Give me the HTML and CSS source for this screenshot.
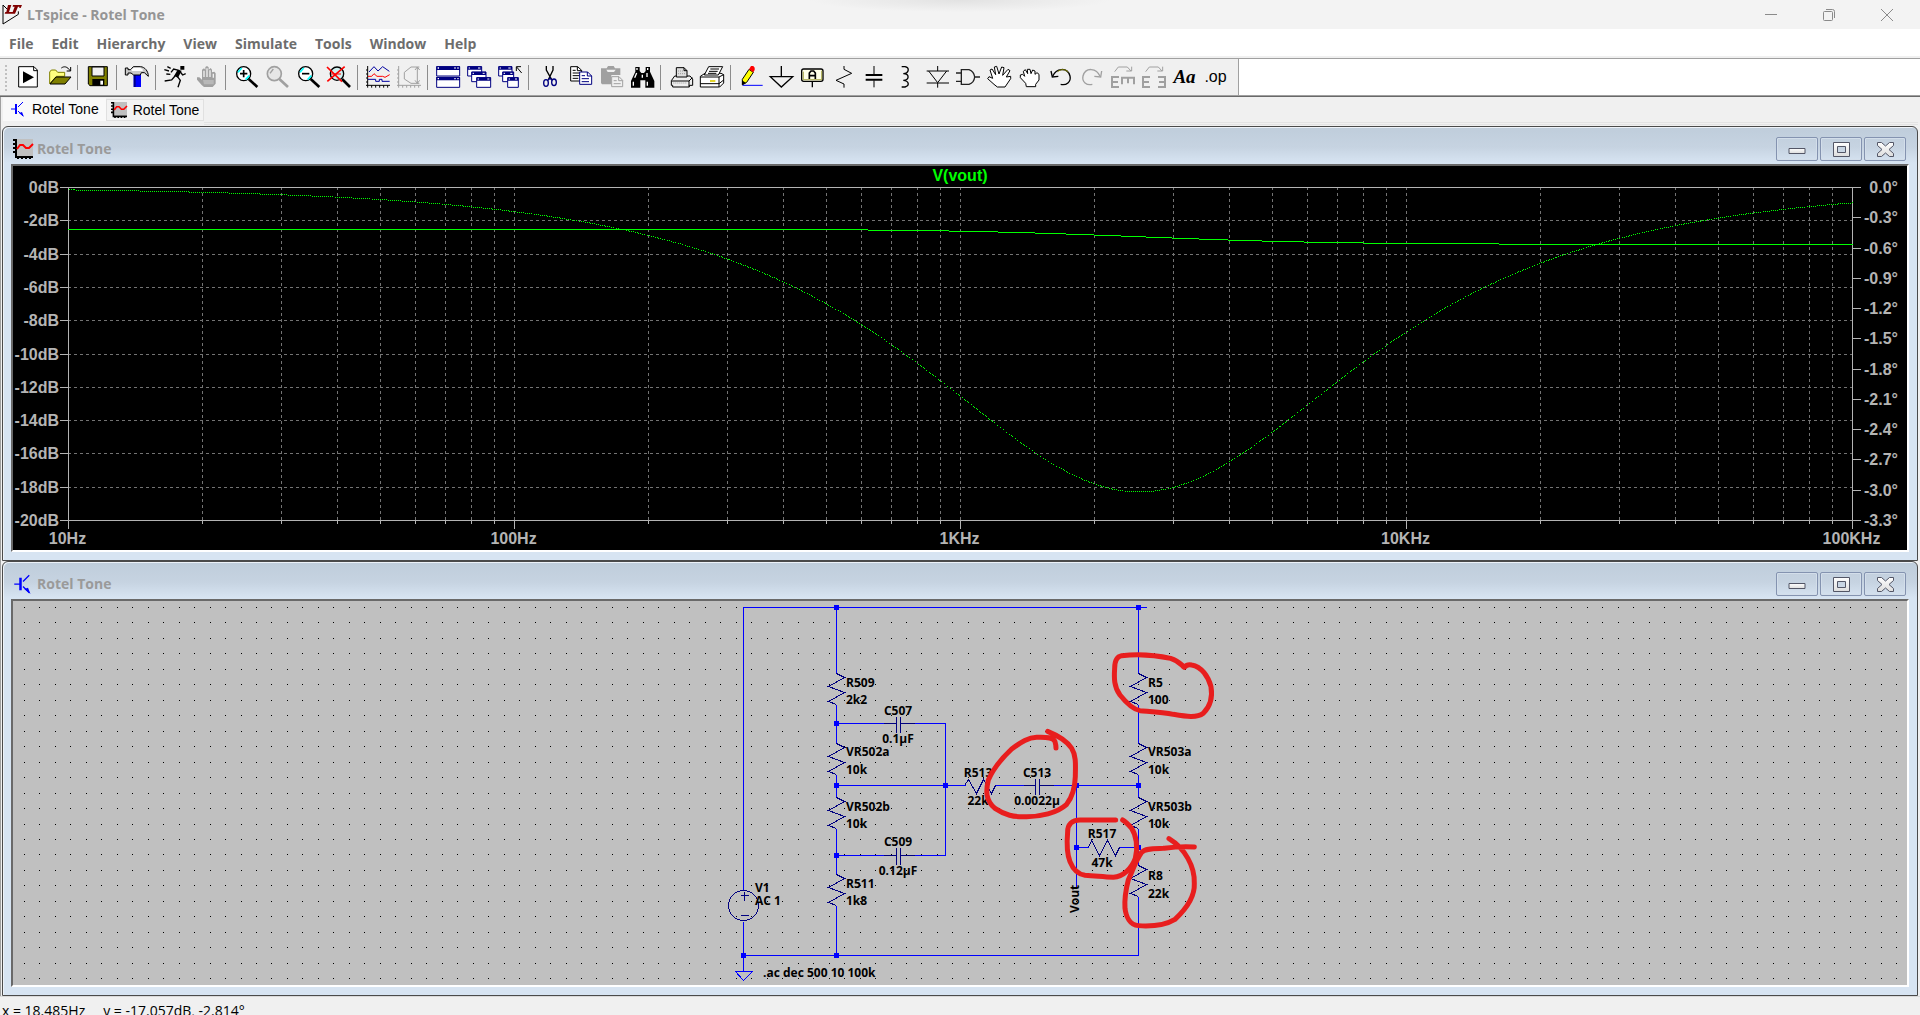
FILE: index.html
```
<!DOCTYPE html>
<html lang="en">
<head>
  <meta charset="utf-8" />
  <meta name="viewport" content="width=device-width, initial-scale=1" />
  <title>LTspice - Rotel Tone</title>
  <link rel="stylesheet" href="styles.css">
</head>
<body>
  <header class="titlebar">
    <svg class="logo" viewBox="0 0 63 63"><path d="M3 3V60L49 31V22" fill="none" stroke="#000" stroke-width="3"/><path d="M3 3L18 18" stroke="#000" stroke-width="3"/><path d="M18 3H28L21 24H33L32 29H8L10 24H13ZM33 3H60L56 12H52V8H48L39 29H30L38 8H32Z" fill="#800000"/></svg>
    <h1>LTspice - Rotel Tone</h1>
    <div class="sys">
      <button aria-label="Minimize"><svg viewBox="0 0 12 12"><path d="M0 5.5H12"/></svg></button>
      <button aria-label="Restore"><svg viewBox="0 0 12 12"><rect x=".5" y="2.5" width="9" height="9" rx="1"/><path d="M3 .5H9.5Q11.500 .5 11.500 2.500V9"/></svg></button>
      <button aria-label="Close"><svg viewBox="0 0 12 12"><path d="M0 0L12 12M12 0L0 12"/></svg></button>
    </div>
  </header>

  <nav class="menu">
    <button>File</button><button>Edit</button><button>Hierarchy</button><button>View</button><button>Simulate</button><button>Tools</button><button>Window</button><button>Help</button>
  </nav>

  <div class="toolrow">
    <div class="toolbar">
      <button aria-label="Run schematic"><svg viewBox="0 0 75 75"><path d="M11 5H57L67 15V66H11Z" fill="#fff" stroke="#000" stroke-width="3"/><path d="M56 5V17H67" fill="none" stroke="#000" stroke-width="3"/><path d="M24 19V55L57 37Z"/></svg></button>
      <button aria-label="Open"><svg viewBox="0 0 75 75"><path d="M11 56V21L16 15H29L35 22H56V34H31Z" fill="#ffff80" stroke="#808000" stroke-width="3"/><path d="M12 57L30 36H75L57 57Z" fill="#808000" stroke="#000" stroke-width="3"/><path d="M46 9C54 3 64 4 72 17M62 18H74V6" fill="none" stroke="#000" stroke-width="3"/></svg></button>
      <i class="sep"></i>
      <button aria-label="Save"><svg viewBox="0 0 75 75"><path d="M10 5H67V62H15L10 57Z" fill="#808000" stroke="#000" stroke-width="3"/><path d="M21 6H57V33H21Z" fill="#f0f0f0" stroke="#000" stroke-width="3"/><path d="M22 42H58V62H22Z"/><path d="M46 47H54V59H46Z" fill="#fff"/></svg></button>
      <i class="sep"></i>
      <button aria-label="Control panel"><svg viewBox="0 0 75 75"><path d="M29 29H51V66H29Z" fill="#00f"/><path d="M29 29H35V66H29Z" fill="#008"/><path d="M4 9H12V14H20L28 5H50C62 6 73 18 73 34L61 23H52L49 30H29L21 24H12V30H4Z" fill="#c8c8c8" stroke="#000" stroke-width="3"/><path d="M22 13L30 8H48L56 13V18H24Z" fill="#fff"/></svg></button>
      <i class="sep"></i>
      <button aria-label="Run"><svg viewBox="0 0 75 75"><path d="M52 3H64V14H52ZM44 14L56 17L45 38L33 33Z"/><path d="M50 17L32 12L24 22M52 21L59 30L68 26M36 33L26 45L5 48M43 34L52 46L45 67M13 5L23 10M4 14L18 18M10 27L22 28" fill="none" stroke="#000" stroke-width="4"/></svg></button>
      <button aria-label="Halt"><svg viewBox="0 0 75 75"><path d="M23 60L9 44V37H16L24 44V14L30 10L34 14V6L39 3L44 7V14L50 9L54 14V22L61 20L65 25V56L56 66H30Z" fill="#a0a0a0"/><path d="M30 17V36M39 10V36M48 16V36M58 26V38" stroke="#f0f0f0" stroke-width="4"/><path d="M27 45H59V58H30Z" fill="#b8b8b8"/></svg></button>
      <i class="sep"></i>
      <button aria-label="Zoom in"><svg viewBox="0 0 75 75"><circle cx="32" cy="26" r="21" fill="#fff" stroke="#000" stroke-width="4"/><path d="M15 22L26 9M38 44L49 32" stroke="#0ff" stroke-width="5"/><path d="M21 26H43M32 15V37" stroke="#000" stroke-width="5"/><path d="M47 42L73 66" stroke="#000" stroke-width="8"/></svg></button>
      <button aria-label="Pan"><svg viewBox="0 0 75 75"><circle cx="31" cy="26" r="21" fill="#e6e6e6" stroke="#a0a0a0" stroke-width="5"/><path d="M18 25L28 12" stroke="#a0a0a0" stroke-width="4"/><path d="M46 42L72 66" stroke="#a0a0a0" stroke-width="8"/></svg></button>
      <button aria-label="Zoom out"><svg viewBox="0 0 75 75"><circle cx="32" cy="26" r="21" fill="#fff" stroke="#000" stroke-width="4"/><path d="M15 22L26 9M38 44L49 32" stroke="#0ff" stroke-width="5"/><path d="M21 26H43" stroke="#000" stroke-width="5"/><path d="M47 42L73 66" stroke="#000" stroke-width="8"/></svg></button>
      <button aria-label="Zoom full extents"><svg viewBox="0 0 75 75"><circle cx="33" cy="26" r="20" fill="#cfefef" stroke="#000" stroke-width="4"/><path d="M48 42L72 66" stroke="#000" stroke-width="8"/><path d="M3 6L48 50M56 5L4 49" stroke="#f00" stroke-width="5"/><path d="M15 27H45" stroke="#f00" stroke-width="3"/></svg></button>
      <i class="sep"></i>
      <button aria-label="Autorange"><svg viewBox="0 0 75 75"><path d="M8 3V68M3 61H75M3 15H8M3 27H8M3 39H8M3 51H8M20 61V68M32 61V68M44 61V68M56 61V68M68 61V68" fill="none" stroke="#000" stroke-width="3"/><path d="M12 21L27 5L39 18L53 5L73 19" fill="none" stroke="#0000a0" stroke-width="3"/><path d="M9 34H20L27 26L36 34H53L60 37L74 29" fill="none" stroke="#f00" stroke-width="3"/><path d="M9 43H32V49H43V43H51V49H74" fill="none" stroke="#0000a0" stroke-width="3"/></svg></button>
      <button aria-label="Plot settings"><svg viewBox="0 0 75 75"><g fill="none" stroke="#a0a0a0" stroke-width="3"><path d="M8 3V68M3 61H75M3 15H8M3 27H8M3 39H8M3 51H8M20 61V68M32 61V68M44 61V68M56 61V68M68 61V68"/><path d="M70 6H45L25 22V42L45 55H70M64 6V55M57 15L64 6L71 15M57 46L64 55L71 46"/></g></svg></button>
      <i class="sep"></i>
      <button aria-label="Tile windows"><svg viewBox="0 0 75 75"><g fill="#fff" stroke="#000080" stroke-width="3"><path d="M5 5H74V33H5ZM5 37H74V67H5Z"/></g><path d="M4 4H75V15H4ZM4 36H75V46H4Z" fill="#000080"/><path d="M8 9H12M58 9H62M67 9H71M8 41H12M58 41H62M67 41H71" stroke="#fff" stroke-width="4"/></svg></button>
      <button aria-label="Cascade windows"><svg viewBox="0 0 75 75"><g fill="#fff" stroke="#000080" stroke-width="3"><path d="M5 5H47V33H5Z"/><path d="M17 21H60V50H17Z"/><path d="M32 38H74V67H32Z"/></g><path d="M5 4H47V14H5ZM17 20H60V30H17ZM32 37H74V47H32Z" fill="#000080"/><path d="M8 9H12M36 9H43M20 25H24M50 25H56M35 42H39M64 42H70" stroke="#fff" stroke-width="3"/></svg></button>
      <button aria-label="Close all"><svg viewBox="0 0 75 75"><g fill="#fff" stroke="#000080" stroke-width="3"><path d="M5 5H45V33H5Z"/><path d="M17 21H50V50H17Z"/><path d="M32 38H64V67H32Z"/></g><path d="M5 4H45V14H5ZM17 20H50V30H17ZM32 37H64V47H32Z" fill="#000080"/><path d="M8 9H12M34 9H41M20 25H24M40 25H46M35 42H39M54 42H60" stroke="#fff" stroke-width="3"/><path d="M58 18V5H72M59 6L74 24" fill="none" stroke="#000" stroke-width="3"/></svg></button>
      <i class="sep"></i>
      <button aria-label="Cut"><svg viewBox="0 0 75 75"><path d="M31 3V15L47 44M51 3V15L37 44" fill="none" stroke="#000" stroke-width="4"/><g fill="none" stroke="#000080" stroke-width="4"><ellipse cx="30" cy="54" rx="7" ry="10"/><ellipse cx="54" cy="52" rx="7" ry="10"/><path d="M36 46L42 39L48 46"/></g></svg></button>
      <button aria-label="Copy"><svg viewBox="0 0 75 75"><path d="M11 5H32L44 16V48H11Z" fill="#fff" stroke="#000" stroke-width="3"/><path d="M31 5V17H44M17 16H26M17 24H38M17 32H38M17 40H34" fill="none" stroke="#000" stroke-width="3"/><path d="M38 21H62L74 33V58H38Z" fill="#fff" stroke="#000080" stroke-width="3"/><path d="M61 21V33H74M44 32H54M44 41H66M44 50H66" fill="none" stroke="#000080" stroke-width="3"/></svg></button>
      <button aria-label="Paste"><svg viewBox="0 0 75 75"><path d="M9 10H26L30 3H47L51 10H67V30H40V58H12L9 54Z" fill="#a0a0a0"/><path d="M25 14H53L48 21H29Z" fill="#f0f0f0"/><path d="M41 35H63L74 46V65H41Z" fill="#f0f0f0" stroke="#a0a0a0" stroke-width="3"/><path d="M62 35V47H74M47 47H56M47 56H68" fill="none" stroke="#a0a0a0" stroke-width="3"/></svg></button>
      <button aria-label="Find"><svg viewBox="0 0 75 75"><path d="M19 6H32V18L37 24H45L50 18V6H63V20L76 48V68H49V46H34V68H6V48L19 20Z"/><path d="M24 9V15M56 9V15M23 24L17 38M54 24V36M13 50V62M55 50V62M40 29V38" stroke="#fff" stroke-width="4"/></svg></button>
      <i class="sep"></i>
      <button aria-label="Print"><svg viewBox="0 0 75 75"><g stroke="#000" stroke-width="3"><path d="M10 47L20 33H66L74 42V61H64V66H14V61H10Z" fill="#eee"/><path d="M25 36V8H48L57 17V36Z" fill="#ddd"/><path d="M48 8V17H57M11 48H63V65M63 48L73 38" fill="none"/></g><path d="M16 54H58M30 18H46M30 26H52" stroke="#999" stroke-width="3" stroke-dasharray="3 3"/></svg></button>
      <button aria-label="Print setup"><svg viewBox="0 0 75 75"><g fill="#fff" stroke="#000" stroke-width="3"><path d="M4 34L18 25H66L74 29V54L62 66H4Z"/><path d="M16 30L29 5H71L58 30Z"/><path d="M4 36H60V66M60 36L74 29M4 56H60L74 45" fill="none"/><path d="M34 12H60M30 19H56M27 25H52"/></g><path d="M33 48H49" stroke="#dc0" stroke-width="5"/></svg></button>
      <i class="sep"></i>
      <button aria-label="Draw wire"><svg viewBox="0 0 75 75"><path d="M13 60V43L33 13L46 22L26 52Z" fill="#ff0" stroke="#000" stroke-width="3"/><path d="M33 13L39 3H46L50 8V15L46 22Z" fill="#f00"/><path d="M12 59V46L24 54Z"/><path d="M14 61H74" stroke="#00f" stroke-width="3"/></svg></button>
      <button aria-label="Ground"><svg viewBox="0 0 75 75"><path d="M37 3V35M4 35H71L37 66Z" fill="none" stroke="#000" stroke-width="4"/></svg></button>
      <button aria-label="Label net"><svg viewBox="0 0 75 75"><rect x="5" y="12" width="64" height="37" rx="6" fill="#ffffe8" stroke="#000" stroke-width="4"/><path d="M37 49V67" stroke="#000" stroke-width="4"/><path d="M28 42V24L33 18H41L46 24V42M28 32H46" fill="none" stroke="#000" stroke-width="5"/><path d="M10 20V44H65V17" fill="none" stroke="#808000" stroke-width="2"/></svg></button>
      <button aria-label="Resistor"><svg viewBox="0 0 75 75"><path d="M39 3V13L62 25L15 46L39 57V68" fill="none" stroke="#000" stroke-width="3"/></svg></button>
      <button aria-label="Capacitor"><svg viewBox="0 0 75 75"><path d="M36 3V29M36 46V67" stroke="#000" stroke-width="3"/><path d="M11 30H61M11 44H61" stroke="#000" stroke-width="6"/></svg></button>
      <button aria-label="Inductor"><svg viewBox="0 0 75 75"><path d="M26 5H36C50 8 49 24 31 26C50 27 50 44 31 46C49 48 50 62 36 66H26" fill="none" stroke="#000" stroke-width="4"/></svg></button>
      <button aria-label="Diode"><svg viewBox="0 0 75 75"><path d="M8 18H75M8 54H75M41 3V18M41 54V68M14 18L41 53L68 18" fill="none" stroke="#000" stroke-width="3"/></svg></button>
      <button aria-label="Component"><svg viewBox="0 0 75 75"><path d="M19 14H42C53 18 58 28 59 36C58 45 53 55 42 58H19ZM3 24H19M3 49H19M59 36H75" fill="none" stroke="#222" stroke-width="4"/></svg></button>
      <button aria-label="Move"><svg viewBox="0 0 75 75"><path d="M24 58L5 41L9 35L20 40L12 15L18 12L29 29L25 6L32 4L39 27L47 6L54 8L50 31L66 13L72 17L61 36L74 34V41L57 66H34Z" fill="#fff" stroke="#000" stroke-width="3"/></svg></button>
      <button aria-label="Drag"><svg viewBox="0 0 75 75"><path d="M26 55L10 38V30L17 28L23 34L19 19L25 14L32 26L31 13H39L42 26L47 15L54 18V28L60 23L66 28V45L56 58V65H28Z" fill="#fff" stroke="#000" stroke-width="3"/></svg></button>
      <button aria-label="Undo"><svg viewBox="0 0 75 75"><path d="M14 34C24 9 58 5 66 33C70 51 55 62 38 58" fill="none" stroke="#000" stroke-width="4"/><path d="M29 20C39 11 53 12 61 22" fill="none" stroke="#808000" stroke-width="3"/><path d="M9 18L13 36L31 34" fill="none" stroke="#000" stroke-width="4"/></svg></button>
      <button aria-label="Redo"><svg viewBox="0 0 75 75"><path d="M63 34C53 9 20 5 12 33C8 51 23 62 40 58" fill="none" stroke="#a0a0a0" stroke-width="4"/><path d="M68 18L65 36L46 34" fill="none" stroke="#a0a0a0" stroke-width="4"/></svg></button>
      <button aria-label="Rotate"><svg viewBox="0 0 75 75"><g fill="none" stroke="#a0a0a0" stroke-width="6"><path d="M27 36H6V66H27M6 51H24"/><path d="M36 58V38H72V58M54 38V55"/><path d="M14 20L25 6H52L63 18M49 18H65V5" stroke-width="3"/></g></svg></button>
      <button aria-label="Mirror"><svg viewBox="0 0 75 75"><g fill="none" stroke="#a0a0a0" stroke-width="6"><path d="M27 36H6V66H27M6 51H24"/><path d="M51 36H72V66H51M72 51H54"/><path d="M14 20L25 6H52L63 18M49 18H65V5" stroke-width="3"/></g></svg></button>
      <button class="aa">Aa</button>
      <button class="op">.op</button>
    </div>
  </div>

  <div class="tabs">
    <button class="tab active"><svg viewBox="0 0 16 16"><use href="#transistor"/></svg>Rotel Tone</button>
    <button class="tab"><svg viewBox="0 0 20 20"><use href="#wave"/></svg>Rotel Tone</button>
  </div>

  <main class="mdi">
    <section class="window">
      <div class="caption">
        <svg viewBox="0 0 20 20"><use href="#wave"/></svg>
        <h2>Rotel Tone</h2>
        <button aria-label="Minimize"><svg viewBox="0 0 20 18"><use href="#min"/></svg></button>
        <button aria-label="Maximize"><svg viewBox="0 0 20 18"><use href="#max"/></svg></button>
        <button aria-label="Close"><svg viewBox="0 0 20 18"><use href="#close"/></svg></button>
      </div>
      <div class="client plot"><svg id="plot"></svg></div>
    </section>

    <section class="window">
      <div class="caption">
        <svg viewBox="0 0 16 16"><use href="#transistor"/></svg>
        <h2>Rotel Tone</h2>
        <button aria-label="Minimize"><svg viewBox="0 0 20 18"><use href="#min"/></svg></button>
        <button aria-label="Maximize"><svg viewBox="0 0 20 18"><use href="#max"/></svg></button>
        <button aria-label="Close"><svg viewBox="0 0 20 18"><use href="#close"/></svg></button>
      </div>
      <div class="client schematic">
        <svg>
          <path id="dots" class="dots"/>
          <g class="wire">
            <path d="M730 289V6H1133M730 320V370M730 354H1125V295M823 6V72M823 103V142M823 173V196M823 227V273M823 304V354"/>
            <path d="M823 122H870M901 122H932V254H901M823 254H870M823 184H952M982 184H1010M1040 184H1125M1125 6V72M1125 103V142M1125 173V196M1125 227V264M1063 184V286M1063 246H1075M1106 246H1125"/>
            <path d="M722 370H739L730 379Z"/>
          </g>
          <g class="part" id="parts">
            <path d="M870 122H883M883 115V131M887 115V131M887 122H901M870 254H883M883 246V263M887 246V263M887 254H901"/>
            <path d="M1010 184H1022M1022 177V193M1026 177V193M1026 184H1040"/>
            <path d="M951 184L955 178L963 192L970 178L978 192L982 184M1075 246L1078 239L1086 254L1094 239L1102 254L1106 246"/>
            <circle cx="730" cy="304" r="15"/>
            <path d="M727 294H735M731 290V299M727 314H735"/>
          </g>
          <g class="node" id="nodes"></g>
          <g class="label" id="labels"></g>
          <g class="marker" transform="translate(937 -11) scale(.3333)">
            <path d="M703 232C690 220 685 212 662 205C620 196 560 192 515 197C500 200 494 215 494 235C492 265 492 290 510 315C530 340 548 358 570 362C610 365 640 366 670 373C710 380 740 385 760 370C780 350 788 320 783 290C775 260 755 230 725 225C715 223 708 226 703 232"/>
            <path d="M293 424C320 435 350 450 365 475C380 500 376 530 376 560C375 590 368 620 350 643C320 670 270 680 230 680C190 682 165 675 135 655C105 630 108 600 115 570C130 535 155 505 185 477C215 455 235 443 260 442C290 441 310 442 315 455C318 465 318 470 318 474"/>
            <path d="M497 690H390C365 690 353 705 353 725C350 760 350 790 360 815C370 840 385 853 405 856C440 858 460 861 490 862C520 860 545 835 556 805C565 770 558 735 545 715C535 703 525 694 518 690"/>
            <path d="M733 771C690 768 670 771 640 775C610 776 585 775 575 787C555 815 545 850 535 870C526 905 524 940 525 955C528 980 540 1005 565 1007C610 1010 650 1003 675 988C705 960 735 920 733 880C735 830 705 775 657 746"/>
          </g>
        </svg>
      </div>
    </section>
  </main>

  <footer class="status"><span>x = 18.485Hz</span><span>y = -17.057dB, -2.814°</span></footer>

  <svg class="defs">
    <defs>
      <linearGradient id="shine" x2="0" y2="1"><stop stop-color="#fff"/><stop offset="1" stop-color="#ddd"/></linearGradient>
      <g id="transistor"><path d="M1 8H6M8 6L13 1M8 10L13 15" fill="none" stroke="#00f"/><path d="M5 3H7V13H5ZM9 12L12 11L14 16Z" fill="#00f"/></g>
      <g id="wave"><path d="M3 0H20V17H3Z" fill="#c0c0c0"/><path d="M3 0V18H20M0 1H3M0 5H3M0 9H3M0 13H3M5 17V20M9 17V20M13 17V20M17 17V20" fill="none" stroke="#000" stroke-width="2"/><path d="M4 10L7 6H10L13 9H16L20 5" fill="none" stroke="#f00" stroke-width="2"/></g>
      <path id="min" d="M2 8.500H18V13.500H2Z" fill="url(#shine)" stroke="#535666"/>
      <path id="max" d="M2.500 2.500H18.500V16.500H2.500ZM6.500 6.500V12.500H14.500V6.500Z" fill="url(#shine)" stroke="#535666"/>
      <path id="close" d="M2.500 2.500H6.500L10.500 6L14.500 2.500H18.500V5.500L14 9.500L18.500 13.500V16.500H14.500L10.500 13L6.500 16.500H2.500V13.500L7 9.500L2.500 5.500Z" fill="url(#shine)" stroke="#535666"/>
    </defs>
  </svg>
  <script src="script.js"></script>
</body>
</html>
```
FILE: styles.css
```
:root{
  --ui:"Open Sans", "Noto Sans", sans-serif;
  --arial:"Liberation Sans", Arial, sans-serif;
  --face:#f0f0f0;
  --line:#a0a0a0;
  --frame:#d7e4f2;
}

* { box-sizing: border-box; }

body{
  margin:0; height:100vh; overflow:hidden;
  display:flex; flex-direction:column;
  font-family:var(--ui); font-size:14px; background:var(--face); color:#000;
}
button{ border:0; padding:0; margin:0; background:none; font:inherit; color:inherit; }
svg{ display:block; overflow:visible; flex:none; }
h1, h2{ margin:0; font-size:14px; font-weight:700; line-height:20px; }

.titlebar{
  display:flex; align-items:center; height:29px; padding:0 4px 0 2px;
  background:radial-gradient(150px 12px at 50% 0, #e2e2e2, #f3f3f3); color:#959595;
}
.logo{ width:21px; height:21px; margin-right:4px; }
.sys{ margin-left:auto; display:flex; }
.sys button{ width:58px; height:29px; display:grid; place-items:center; }
.sys svg{ width:12px; height:12px; fill:none; stroke:#8a8a8a; }

.menu{
  display:flex; gap:18px; height:30px; padding-left:9px;
  background:#fff; border-bottom:1px solid var(--line); box-shadow:inset 0 -2px var(--face);
  color:#6d6d6d; font-weight:700;
}

.toolrow{ height:38px; background:#fff; border-bottom:1px solid #696969; box-shadow:inset 0 -1px var(--line); }
.toolbar{
  display:flex; align-items:center; width:1239px; height:37px; padding-left:12px;
  background:var(--face); border-right:1px solid var(--line); border-bottom:1px solid var(--line); position:relative;
}
.toolbar::before{ content:""; position:absolute; left:5px; top:6px; bottom:4px; border-left:2px dotted #c0c0c0; }
.toolbar button{ width:31px; height:31px; flex:none; display:grid; place-items:center; }
.toolbar svg{ width:25px; height:25px; }
.sep{ width:8px; height:25px; flex:none; background:linear-gradient(#8c8c8c,#8c8c8c) 3px 0/1px 100% no-repeat; }
.toolbar .aa{ font:italic bold 19px "Liberation Serif", serif; }
.toolbar .op{ font:16px var(--arial); }

.tabs{ display:flex; align-items:flex-start; height:29px; padding:1px 2px 0 2px; border-left:1px solid var(--line); }
.tab{
  display:flex; align-items:center; gap:6px; height:22px; margin-top:1px; padding:0 4px;
  font:14px var(--arial); border:1px solid #e0e0e0; background:#f3f3f3;
}
.tab.active{ height:23px; margin-top:0; padding:0 6px 2px; border-color:#f9f9f9; background:#f9f9f9; }
.tab svg{ width:16px; height:16px; }
.tabs::after{ content:""; flex:1; height:24px; border-bottom:3px double #e3e3e3; }

.mdi{ flex:1; min-height:0; display:flex; flex-direction:column; padding:0 2px 0 1px; border-left:1px solid var(--line); }
.window{
  flex:1; min-height:0; display:flex; flex-direction:column; padding:0 8px 8px;
  border:1px solid #4a4a4a; border-radius:6px 6px 0 0;
  background:linear-gradient(#bfcddb, #c6d3e1 20px, var(--frame) 36px);
  box-shadow:inset 1px 1px #edf2f8;
}
.caption{ display:flex; align-items:center; height:37px; gap:2px; padding:7px 3px 0 2px; color:#9a9a9a; }
.caption > svg{ width:20px; height:20px; margin-right:2px; }
.caption h2{ flex:1; }
.caption button{ width:42px; height:24px; display:grid; place-items:center; border:1px solid #8493b0; border-radius:2px; box-shadow:inset 0 0 0 1px #d3deea; }
.caption button svg{ width:20px; height:18px; }
.client{ flex:1; min-height:0; border:2px solid; border-color:#696969 #fff #fff #696969; }
.client > svg{ width:100%; height:100%; overflow:hidden; shape-rendering:crispEdges; }
.plot{ background:#000; }
.schematic{ background:#c0c0c0; }

#plot path{ fill:none; }
#plot .grid{ stroke:#737373; stroke-dasharray:3 3; }
#plot .axis{ stroke:#b4b4b4; }
#plot .trace{ stroke:#0f0; }
#plot .phase{ stroke:#0f0; stroke-dasharray:1 1; }
#plot text{ font:bold 16px var(--arial); fill:#b4b4b4; }
#plot .name{ fill:#0f0; }

.dots{ stroke:#000; }
.wire path{ fill:none; stroke:#00f; }
.wire, .part{ transform:translate(.5px, .5px); }
.part path, .part circle{ fill:none; stroke:#000080; }
.node rect{ fill:#00f; }
.label text{ font:bold 12px var(--ui); fill:#000; }
.label .mid{ text-anchor:middle; }
.marker path{ fill:none; stroke:#e81e1e; stroke-width:15; stroke-linecap:round; stroke-linejoin:round; shape-rendering:auto; }

.status{ display:flex; gap:18px; height:19px; padding-left:2px; border-top:1px solid #d9d9d9; overflow:hidden; line-height:28px; }
.status span{ height:28px; }
.defs{ position:absolute; width:0; height:0; }
```
FILE: script.js
```
const plot = document.getElementById('plot');

// shelf response of the tone network
const F0 = 2520, RATIO = 0.9, DB_LOW = -2.5;
const fp = F0 * Math.sqrt(RATIO), fz = F0 / Math.sqrt(RATIO);
const magDb = f => DB_LOW + 10 * Math.log10((1 + (f / fz) ** 2) / (1 + (f / fp) ** 2));
const phaseDeg = f => (Math.atan(f / fz) - Math.atan(f / fp)) * 180 / Math.PI;

function drawPlot(){
  const w = plot.clientWidth, h = plot.clientHeight;
  const x0 = 55, x1 = w - 55, y0 = 21, y1 = h - 30;
  const px = v => Math.round(v) + 0.5;
  const fx = f => px(x0 + (x1 - x0) * (Math.log10(f) - 1) / 4);
  const dy = db => px(y0 + (y1 - y0) * -db / 20);
  const py = deg => px(y0 + (y1 - y0) * -deg / 3.3);

  let grid = '', axis = '', text = '';
  for(let d = 1; d < 5; d++){
    for(let m = 1; m < 10; m++){
      const x = fx(m * 10 ** d);
      if(m > 1 || d > 1) grid += `M${x} ${y0}V${y1}`;
      axis += `M${x} ${y1}v${m === 1 ? 9 : 4}`;
    }
  }
  axis += `M${fx(1e5)} ${y1}v9`;
  for(let i = 0; i <= 10; i++){
    const y = dy(-2 * i);
    if(i > 0 && i < 10) grid += `M${x0} ${y}H${x1}`;
    axis += `M${x0 - 8} ${y}H${x0}`;
    text += `<text x="${x0 - 9}" y="${y + 5.5}" text-anchor="end">${i ? -2 * i : 0}dB</text>`;
  }
  for(let i = 0; i <= 11; i++){
    const y = py(-0.3 * i);
    axis += `M${x1} ${y}h9`;
    text += `<text x="${x1 + 46}" y="${y + 5.5}" text-anchor="end">${i ? '-' : ''}${(0.3 * i).toFixed(1)}°</text>`;
  }
  axis += `M${px(x0)} ${px(y0)}H${px(x1)}V${px(y1)}H${px(x0)}Z`;
  ['10Hz', '100Hz', '1KHz', '10KHz', '100KHz'].forEach((t, i)=>{
    text += `<text x="${fx(10 ** (i + 1)) - 1}" y="${h - 6}" text-anchor="middle">${t}</text>`;
  });
  text += `<text class="name" x="${w / 2}" y="15" text-anchor="middle">V(vout)</text>`;

  let mag = '', lastY = null, ph = [];
  for(let x = x0; x <= x1; x++){
    const f = 10 ** (1 + 4 * (x - x0) / (x1 - x0));
    const y = dy(magDb(f));
    mag += (y === lastY ? 'H' + (x + 1) : `M${x} ${y}h1`);
    lastY = y;
    ph.push(`${x + 0.5} ${py(phaseDeg(f))}`);
  }
  plot.innerHTML = `<path class="grid" d="${grid}"/><path class="axis" d="${axis}"/>
    <path class="trace" d="${mag}"/><path class="phase" d="M${ph.join('L')}"/>${text}`;
}

const zig = (x, y) => `<path d="M${x} ${y}L${x + 8} ${y + 4}L${x - 8} ${y + 13}L${x + 8} ${y + 19}L${x - 8} ${y + 28}L${x} ${y + 31}"/>`;
const resistors = [[823,72],[823,142],[823,196],[823,273],[1125,72],[1125,142],[1125,196],[1125,264]];
const nodes = [[823,6],[1125,6],[823,122],[823,184],[932,184],[823,254],[730,354],[823,354],[1063,184],[1125,184],[1063,246],[1125,246]];
const labels = [
  [833,86,'R509'],[833,103,'2k2'],[833,155,'VR502a'],[833,173,'10k'],[833,210,'VR502b'],[833,227,'10k'],
  [833,287,'R511'],[833,304,'1k8'],[742,291,'V1'],[742,304,'AC 1'],[750,376,'.ac dec 500 10 100k'],
  [1135,86,'R5'],[1135,103,'100'],[1135,155,'VR503a'],[1135,173,'10k'],[1135,210,'VR503b'],[1135,227,'10k'],
  [1135,279,'R8'],[1135,297,'22k'],
];
const midLabels = [
  [885,114,'C507'],[885,142,'0.1µF'],[885,245,'C509'],[885,274,'0.12µF'],[965,176,'R513'],[965,204,'22k'],
  [1024,176,'C513'],[1024,204,'0.0022µ'],[1089,237,'R517'],[1089,266,'47k'],
];

function drawSchematic(){
  document.getElementById('parts').insertAdjacentHTML('beforeend', resistors.map(r => zig(...r)).join(''));
  document.getElementById('nodes').innerHTML = nodes.map(([x, y]) => `<rect x="${x - 2}" y="${y - 2}" width="5" height="5"/>`).join('');
  document.getElementById('labels').innerHTML =
    labels.map(([x, y, t]) => `<text x="${x}" y="${y}">${t}</text>`).join('') +
    midLabels.map(([x, y, t]) => `<text class="mid" x="${x}" y="${y}">${t}</text>`).join('') +
    '<text transform="translate(1066 312) rotate(-90)">Vout</text>';
}

function drawDots(){
  const el = document.querySelector('.schematic'), step = 15.475;
  let d = '';
  for(let y = 6.4; y < el.clientHeight; y += step)
    for(let x = 11.4; x < el.clientWidth; x += step)
      d += `M${Math.floor(x)} ${Math.floor(y) + 0.5}h1`;
  document.getElementById('dots').setAttribute('d', d);
}

drawSchematic();
drawPlot();
drawDots();
window.addEventListener('resize', ()=>{ drawPlot(); drawDots(); });
```
